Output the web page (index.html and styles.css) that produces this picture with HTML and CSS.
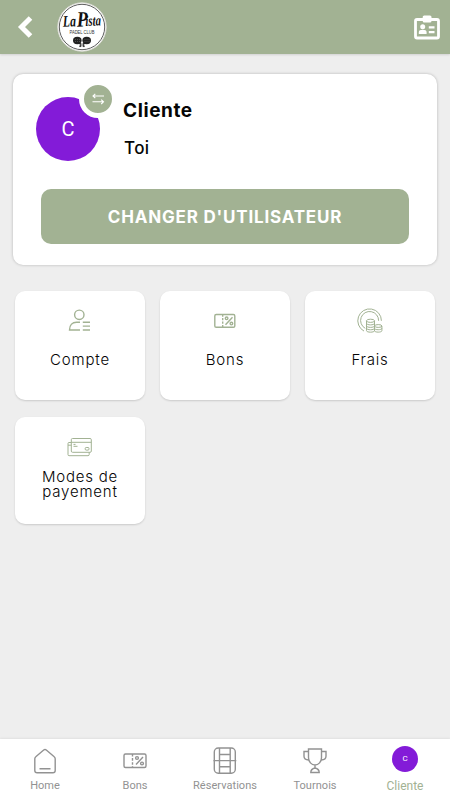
FILE: index.html
```html
<!DOCTYPE html>
<html lang="fr">
<head>
    <meta charset="UTF-8" />
    <meta name="viewport" content="width=device-width, initial-scale=1.0"/>
    <title>La Pista Padel Club</title>
    <link rel="stylesheet" href="styles.css">
</head>
<body>

<header class="topbar">
    <svg class="back" width="16" height="22" viewBox="0 0 16 22">
        <path d="M13.5 2L4.500 11l9 9" fill="none" stroke="#fff" stroke-width="5"/>
    </svg>
    <svg class="logo" width="50" height="50" viewBox="0 0 50 50">
        <circle cx="25" cy="25" r="24.2" fill="#fff" stroke="#deded8"/>
        <circle cx="25" cy="25" r="22.7" fill="none" stroke="#333" stroke-width=".8"/>
        <g class="logo-name" transform="rotate(-2 25 23)">
            <text x="6" y="24" font-size="16" textLength="13" lengthAdjust="spacingAndGlyphs">La</text>
            <text x="20" y="24.500" font-size="22" textLength="11" lengthAdjust="spacingAndGlyphs">P</text>
            <text x="28.500" y="24" font-size="15" textLength="15.500" lengthAdjust="spacingAndGlyphs">ista</text>
        </g>
        <text class="logo-sub" x="12.500" y="31.700" textLength="25" lengthAdjust="spacingAndGlyphs">PADEL CLUB</text>
        <g fill="#222">
            <ellipse cx="20.3" cy="38.5" rx="4.3" ry="3.7"/>
            <ellipse cx="29.7" cy="38.5" rx="4.3" ry="3.7"/>
            <path d="M22 40l6 4-1 1.3-6-4zM28 40l-6 4 1 1.3 6-4z"/>
        </g>
        <path d="M18 37.500h5M18 39.500h5M27.500 37.500h5M27.500 39.500h5" stroke="#777" stroke-width=".5" stroke-dasharray="1 1"/>
    </svg>
    <svg class="idcard" width="26" height="25" viewBox="0 0 26 25">
        <rect x="1.5" y="4.500" width="23" height="18.5" rx="1.5" fill="none" stroke="#fff" stroke-width="2.8"/>
        <rect x="8.7" y="0.5" width="8.8" height="7" rx="1.5" fill="#fff"/>
        <circle cx="8.7" cy="11.8" r="2.5" fill="#fff"/>
        <path d="M4.8 19v-2c0-1.5 1.5-2.2 3.9-2.2s3.9.7 3.9 2.2v2zM14.8 11.2h5.7v2.3h-5.7zM14.8 15.9h5.7v2.3h-5.7z" fill="#fff"/>
    </svg>
</header>

<main>
    <section class="user-card">
        <div class="user">
            <div class="avatar">C
                <div class="switch">
                    <svg width="14" height="12" viewBox="0 0 14 12" fill="none" stroke="#fff" stroke-width="1.1">
                        <path d="M13 3H2M4.3.8L2 3l2.3 2.2M1.5 8.8H12.5M10.2 6.6l2.3 2.2-2.3 2.2"/>
                    </svg>
                </div>
            </div>
            <div class="user-text">
                <h1>Cliente</h1>
                <p>Toi</p>
            </div>
        </div>
        <button>CHANGER D'UTILISATEUR</button>
    </section>

    <section class="tiles">
        <a class="tile">
            <svg width="26" height="26" viewBox="0 0 26 26">
                <circle cx="12.3" cy="6.8" r="4.7"/>
                <path d="M13 14.3H9.500c-4 0-7 2.700-7 7.700H13M15.800 14.300h7.200M15.800 18.100h7.200M15.800 22h7.200"/>
            </svg>
            <span>Compte</span>
        </a>
        <a class="tile">
            <svg width="26" height="26" viewBox="0 0 26 26">
                <rect x="2.8" y="6.5" width="20" height="12.8" rx="1.4"/>
                <path d="M10.700 6.500v12.800" stroke-dasharray="2.2 1.3"/>
                <path d="M20.500 9.200l-7 7.500"/>
                <circle cx="14.6" cy="10.3" r="1.3"/>
                <circle cx="19.4" cy="15.6" r="1.3"/>
            </svg>
            <span>Bons</span>
        </a>
        <a class="tile">
            <svg class="thin" width="26" height="26" viewBox="0 0 26 26">
                <path d="M7 23.1A11.8 11.8 0 1 1 24.4 12.8M8.3 20.4A9 9 0 1 1 21.6 12.8"/>
                <ellipse cx="13.5" cy="12.8" rx="4" ry="1.6"/>
                <path d="M9.500 12.800v9.800c0 2.100 8 2.100 8 0v-9.800M9.500 15.300c0 2.100 8 2.100 8 0M9.500 17.800c0 2.100 8 2.100 8 0M9.500 20.200c0 2.100 8 2.100 8 0"/>
                <ellipse cx="21.2" cy="18" rx="3.7" ry="1.4"/>
                <path d="M17.500 18v4.700c0 1.900 7.400 1.900 7.400 0V18M17.500 20.300c0 1.900 7.400 1.900 7.400 0"/>
            </svg>
            <span>Frais</span>
        </a>
        <a class="tile">
            <svg class="thin" width="26" height="26" viewBox="0 0 26 26">
                <rect x="4.3" y="4.5" width="20" height="13.8" rx="1.2"/>
                <path d="M4.300 8.300h20M6.500 10.400h2M6.500 12.300h4M4.300 8.500H2q-1 0-1 1v11q0 1.200 1 1.200h19q1.200 0 1.200-1.200v-2.200M1 11.200h3.300"/>
                <rect x="18.2" y="13.5" width="3.8" height="2.6" rx="1"/>
            </svg>
            <span class="two-lines">Modes de payement</span>
        </a>
    </section>
</main>

<nav class="tabbar">
    <a class="tab">
        <svg width="30" height="30" viewBox="0 0 30 30">
            <path d="M4.800 12.700q0-1.200 1-2L13.700 4q1.300-1 2.600 0l7.900 6.700q1 .8 1 2v11.800q0 2.300-2.300 2.300H7.100q-2.300 0-2.300-2.300zM9.500 22.700h11"/>
        </svg>
        <span>Home</span>
    </a>
    <a class="tab">
        <svg width="30" height="30" viewBox="0 0 30 30">
            <rect x="4" y="8" width="22" height="13.5" rx="1.5"/>
            <path d="M12.500 8v13.500" stroke-dasharray="2.6 1.5"/>
            <path d="M23 11l-7 7.500"/>
            <circle cx="17" cy="12" r="1.4"/>
            <circle cx="22" cy="17.5" r="1.4"/>
        </svg>
        <span>Bons</span>
    </a>
    <a class="tab">
        <svg width="30" height="30" viewBox="0 0 30 30">
            <rect x="4.3" y="2" width="21" height="25.3" rx="4"/>
            <path d="M9.500 2v25.300M20.200 2v25.300M3.500 14.600h22.800M9.500 8.500h10.700M9.500 20.700h10.700"/>
        </svg>
        <span class="spaced">Réservations</span>
    </a>
    <a class="tab">
        <svg width="30" height="30" viewBox="0 0 30 30">
            <path d="M8.500 3h13v8.700c0 4-3 7.300-6.500 7.300s-6.500-3.300-6.500-7.300zM8.500 5.500H4v4.700q0 3.500 4.700 3.800M21.500 5.500H26v4.700q0 3.500-4.700 3.800M10.800 26.500q0-3.500 4.200-4.500 4.200 1 4.200 4.500zM15 19v3"/>
        </svg>
        <span class="spaced">Tournois</span>
    </a>
    <a class="tab active">
        <div class="mini-avatar">C</div>
        <span>Cliente</span>
    </a>
</nav>

</body>
</html>
```
FILE: styles.css
```css
* {
    box-sizing: border-box;
}

body {
    margin: 0;
    height: 100vh;
    display: flex;
    flex-direction: column;
    overflow: hidden;
    background: #eee;
    color: #050505;
    font-family: Inter, sans-serif;
}

.topbar {
    display: flex;
    align-items: center;
    height: 54px;
    padding: 0 10px 0 17px;
    background: #a2b293;
    box-shadow: 0 1px 2px rgba(0, 0, 0, 0.12);
}

.logo {
    margin-left: 24px;
}

.logo-name {
    font-family: "Liberation Serif", serif;
    font-style: italic;
    font-weight: bold;
    fill: #111;
}

.logo-sub {
    font-family: "Liberation Sans", sans-serif;
    font-size: 6px;
    fill: #333;
}

.idcard {
    margin-left: auto;
}

main {
    flex: 1;
    padding: 20px 13px;
}

.user-card {
    height: 191px;
    padding: 23px 28px 0;
    background: #fff;
    border-radius: 10px;
    box-shadow: 0 0 3px rgba(0, 0, 0, 0.25);
}

.user {
    display: flex;
    height: 92px;
    margin-left: -5px;
}

.avatar {
    position: relative;
    width: 64px;
    height: 64px;
    border-radius: 50%;
    background: #831bd8;
    color: #fff;
    font: 20px/64px Roboto, sans-serif;
    text-align: center;
}

.switch {
    position: absolute;
    top: -17px;
    left: 43px;
    display: flex;
    align-items: center;
    justify-content: center;
    width: 38px;
    height: 38px;
    border: 5px solid #fff;
    border-radius: 50%;
    background: #a2b293;
}

.user-text {
    margin-left: 23px;
}

h1 {
    margin: 2px 0 0;
    font-size: 19px;
    line-height: 24px;
    font-weight: 700;
    letter-spacing: 0.6px;
}

.user-text p {
    margin: 14px 0 0 1px;
    font-size: 17px;
    line-height: 22px;
    font-weight: 500;
    letter-spacing: 0.4px;
}

button {
    display: block;
    width: 100%;
    height: 55px;
    padding: 0;
    border: none;
    border-radius: 10px;
    background: #a2b293;
    color: #fff;
    font: 700 17px Inter, sans-serif;
    letter-spacing: 0.8px;
}

.tiles {
    display: grid;
    grid-template-columns: repeat(3, 130px);
    grid-template-rows: 109px 107px;
    gap: 17px 15px;
    margin: 26px 0 0 2px;
}

.tile {
    display: flex;
    flex-direction: column;
    align-items: center;
    padding-top: 17px;
    background: #fff;
    border-radius: 10px;
    box-shadow: 0 1px 2px rgba(0, 0, 0, 0.15);
}

.tile svg {
    fill: none;
    stroke: #a2b293;
    stroke-width: 1.4;
}

.tile svg.thin {
    stroke-width: 1;
}

.tile span {
    margin-top: 16px;
    font-size: 15px;
    line-height: 20px;
    font-weight: 300;
    letter-spacing: 0.8px;
    text-align: center;
}

.tile .two-lines {
    width: 90px;
    margin-top: 9px;
    line-height: 15px;
}

.tabbar {
    display: grid;
    grid-template-columns: repeat(5, 1fr);
    height: 61px;
    background: #fff;
    box-shadow: 0 -1px 2px rgba(0, 0, 0, 0.06);
}

.tab {
    display: flex;
    flex-direction: column;
    align-items: center;
    padding-top: 7px;
    color: #929292;
    font: 11px/14px Roboto, sans-serif;
}

.tab svg {
    fill: none;
    stroke: #929292;
    stroke-width: 1.4;
}

.tab span {
    margin-top: 3px;
}

.tab .spaced {
    letter-spacing: 0.05px;
}

.tab.active {
    color: #a2b293;
    font-size: 12px;
}

.mini-avatar {
    width: 26px;
    height: 26px;
    margin-bottom: 4px;
    border-radius: 50%;
    background: #831bd8;
    color: #fff;
    font-size: 8px;
    line-height: 26px;
    text-align: center;
}
```
